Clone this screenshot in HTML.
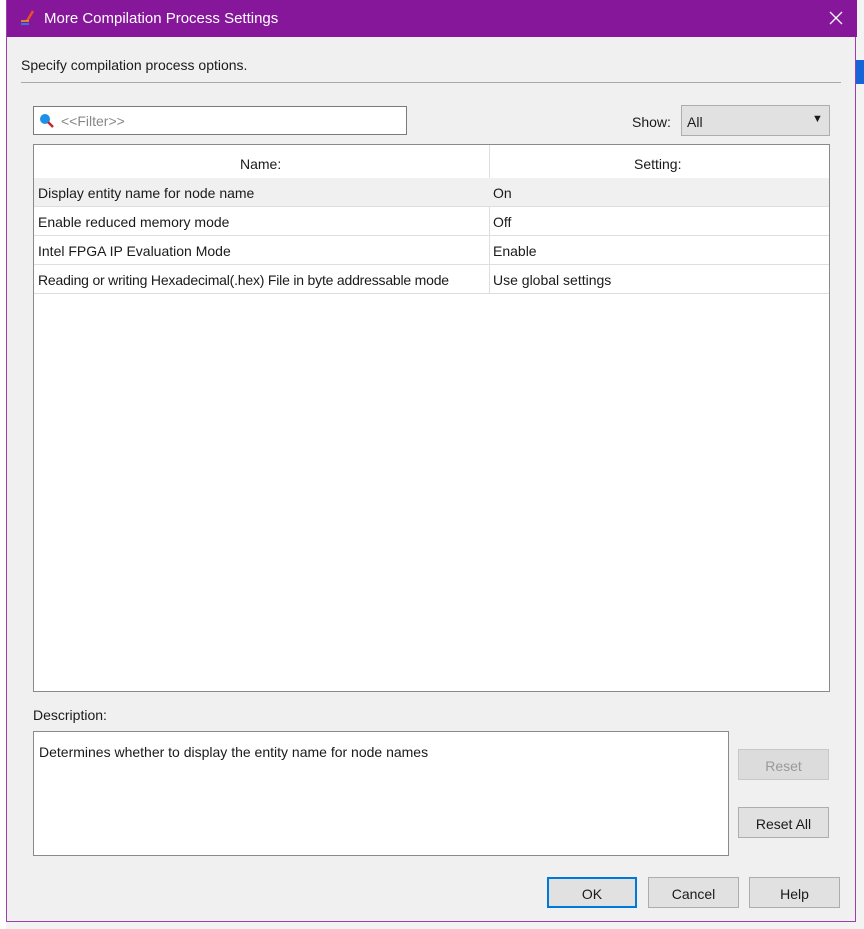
<!DOCTYPE html>
<html><head><meta charset="utf-8"><style>
*{box-sizing:border-box;margin:0;padding:0}
body{width:864px;height:929px;background:#f3f3f3;position:relative;overflow:hidden;font-family:"Liberation Sans",sans-serif;font-size:14px;color:#1a1a1a}
.a{position:absolute}
#dlg{left:6px;top:0;width:850px;height:922px;background:#f0f0f0;border:1px solid #9b3fae;border-top:none}
#title{left:0;top:0;width:850px;height:37px;background:#87179a;color:#fff;font-size:15px}
.btn{position:absolute;background:#e1e1e1;border:1px solid #adadad;text-align:center;font-size:14px}
.row{position:absolute;left:0;width:795px;height:29px;border-bottom:1px solid #dedede}
.row span{position:absolute;top:7px}
</style></head><body>
<div class="a" style="left:0;top:0;width:6px;height:929px;background:#fff"></div>
<div class="a" style="left:856px;top:60px;width:8px;height:24px;background:#1565d8"></div>
<div class="a" id="dlg">
 <div class="a" id="title">
  <svg class="a" style="left:12px;top:9px" width="18" height="18" viewBox="0 0 18 18"><path d="M14 2 L8 12" stroke="#e8502a" stroke-width="2.5"/><path d="M2 12h8" stroke="#f0a020" stroke-width="1.5"/><path d="M2 15h8" stroke="#2a7ad8" stroke-width="2"/></svg>
  <span class="a" style="left:37px;top:10px">More Compilation Process Settings</span>
  <svg class="a" style="left:822px;top:11px" width="14" height="14" viewBox="0 0 14 14"><path d="M1 1L13 13M13 1L1 13" stroke="#fff" stroke-width="1.3"/></svg>
 </div>
 <span class="a" style="left:14px;top:57px">Specify compilation process options.</span>
 <div class="a" style="left:14px;top:82px;width:820px;height:1px;background:#a8a8a8"></div>
 <div class="a" style="left:26px;top:106px;width:374px;height:29px;background:#fff;border:1px solid #7a7a7a">
  <svg class="a" style="left:5px;top:6px" width="16" height="16" viewBox="0 0 16 16"><circle cx="6" cy="6" r="5" fill="#1e90e8"/><path d="M9 9l5 5" stroke="#c0282e" stroke-width="2.5"/></svg>
  <span class="a" style="left:27px;top:6px;color:#888">&lt;&lt;Filter&gt;&gt;</span>
 </div>
 <span class="a" style="left:625px;top:114px">Show:</span>
 <div class="a" style="left:674px;top:105px;width:149px;height:31px;background:#e1e1e1;border:1px solid #adadad">
  <span class="a" style="left:5px;top:8px">All</span><span class="a" style="left:130px;top:7px;font-size:11px">▼</span>
 </div>
 <div class="a" style="left:26px;top:144px;width:797px;height:548px;background:#fff;border:1px solid #8a8a8a">
  <div class="a" style="left:455px;top:0;width:1px;height:148px;background:#dedede"></div>
  <span class="a" style="left:206px;top:11px">Name:</span>
  <span class="a" style="left:600px;top:11px">Setting:</span>
  <div class="row" style="top:33px;background:#f0f0f0"><span style="left:4px">Display entity name for node name</span><span style="left:459px">On</span></div>
  <div class="row" style="top:62px"><span style="left:4px">Enable reduced memory mode</span><span style="left:459px">Off</span></div>
  <div class="row" style="top:91px"><span style="left:4px">Intel FPGA IP Evaluation Mode</span><span style="left:459px">Enable</span></div>
  <div class="row" style="top:120px"><span style="left:4px;letter-spacing:-0.2px">Reading or writing Hexadecimal(.hex) File in byte addressable mode</span><span style="left:459px">Use global settings</span></div>
 </div>
 <span class="a" style="left:26px;top:707px">Description:</span>
 <div class="a" style="left:26px;top:731px;width:696px;height:125px;background:#fff;border:1px solid #8a8a8a">
  <span class="a" style="left:5px;top:12px">Determines whether to display the entity name for node names</span>
 </div>
 <div class="btn" style="left:731px;top:749px;width:91px;height:31px;color:#999;padding-top:8px;background:#dcdcdc;border-color:#c8c8c8">Reset</div>
 <div class="btn" style="left:731px;top:807px;width:91px;height:31px;padding-top:8px">Reset All</div>
 <div class="btn" style="left:540px;top:877px;width:90px;height:31px;border:2px solid #0078d7;padding-top:7px">OK</div>
 <div class="btn" style="left:641px;top:877px;width:91px;height:31px;padding-top:8px">Cancel</div>
 <div class="btn" style="left:742px;top:877px;width:91px;height:31px;padding-top:8px">Help</div>
</div>
</body></html>
